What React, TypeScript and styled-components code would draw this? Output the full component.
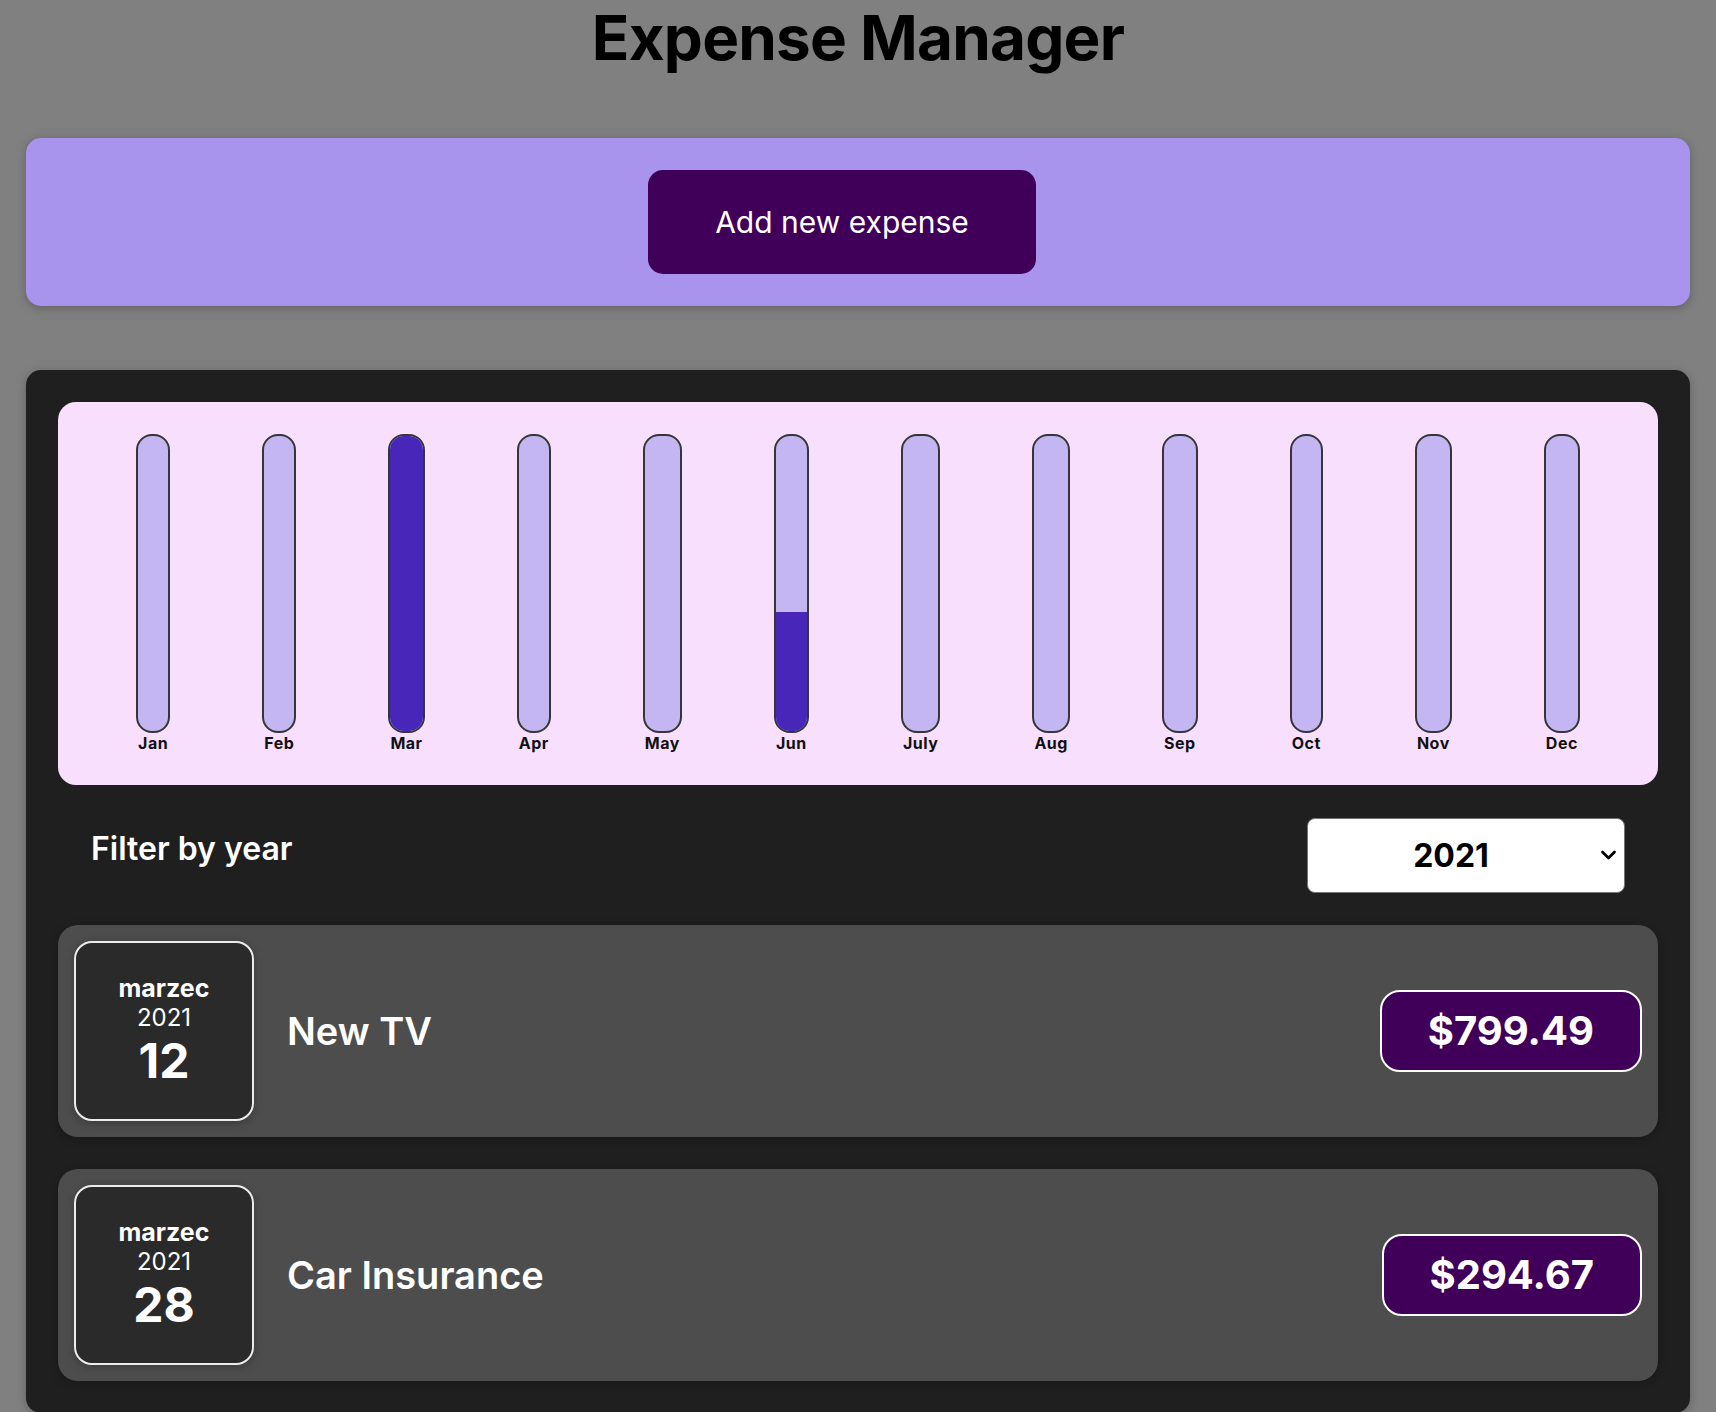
import React from "react";
import styled, { createGlobalStyle } from "styled-components";

const GlobalStyle = createGlobalStyle`
  * { box-sizing: border-box; }
  html, body { margin: 0; padding: 0; }
  body {
    background: #808080;
    font-family: Inter, "Noto Sans", "Liberation Sans", sans-serif;
  }
`;

const Page = styled.div`
  display: flex;
  flex-direction: column;
  padding: 0 26px;
`;

const Title = styled.h1`
  margin: 0;
  text-align: center;
  font-size: 62px;
  line-height: 76px;
  font-weight: 700;
  color: #000;
  letter-spacing: -0.8px;
`;

const NewExpensePanel = styled.div`
  margin-top: 62px;
  background: #a894ed;
  border-radius: 15px;
  padding: 32px;
  display: flex;
  justify-content: center;
  box-shadow: 0 2px 10px rgba(0, 0, 0, 0.25);
`;

const AddButton = styled.button`
  background: #40005a;
  color: #fff;
  border: none;
  border-radius: 15px;
  font-family: inherit;
  font-size: 30px;
  font-weight: 400;
  line-height: 36px;
  padding: 34px 67px;
  margin-right: 32px;
  cursor: pointer;
`;

const ExpensesCard = styled.div`
  margin-top: 64px;
  background: #1f1f1f;
  border-radius: 15px;
  padding: 32px;
  box-shadow: 0 2px 10px rgba(0, 0, 0, 0.25);
`;

const Chart = styled.div`
  background: #f8dffe;
  border-radius: 18px;
  padding: 32px;
  display: flex;
  justify-content: space-around;
`;

const ChartBar = styled.div`
  display: flex;
  flex-direction: column;
  align-items: stretch;
`;

const BarTrack = styled.div`
  height: 299px;
  border: 2px solid #363636;
  border-radius: 16px;
  background: #c3b6f2;
  overflow: hidden;
  display: flex;
  flex-direction: column;
  justify-content: flex-end;
`;

const BarFill = styled.div`
  background: #4826b9;
  width: 100%;
`;

const BarLabel = styled.div`
  font-size: 16px;
  font-weight: 700;
  line-height: 20px;
  text-align: center;
  padding: 0 2px;
  letter-spacing: 0.5px;
  color: #111;
`;

const FilterRow = styled.div`
  display: flex;
  justify-content: space-between;
  align-items: center;
  padding: 33px 33px 32px;
`;

const FilterLabel = styled.label`
  color: #fff;
  font-size: 32px;
  font-weight: 600;
  margin-bottom: 14px;
`;

const SelectWrap = styled.div`
  position: relative;
  width: 318px;
  height: 75px;
`;

const YearSelect = styled.select`
  appearance: none;
  -webkit-appearance: none;
  width: 100%;
  height: 100%;
  background: #fff;
  border: 1px solid #767676;
  border-radius: 8px;
  font-family: inherit;
  font-size: 32px;
  font-weight: 700;
  color: #000;
  text-align: center;
  text-align-last: center;
  padding: 0 30px 0 0;
`;

const Chevron = styled.svg`
  position: absolute;
  right: 8px;
  top: 31px;
  width: 17px;
  height: 12px;
  pointer-events: none;
`;

const ExpenseList = styled.div`
  display: flex;
  flex-direction: column;
  gap: 32px;
`;

const ExpenseItem = styled.div`
  background: #4d4d4d;
  border-radius: 20px;
  padding: 16px;
  display: flex;
  align-items: center;
  box-shadow: 0 2px 8px rgba(0, 0, 0, 0.25);
`;

const DateBox = styled.div`
  width: 180px;
  height: 180px;
  border: 2px solid #ececec;
  border-radius: 18px;
  background: #2a2a2a;
  color: #fff;
  display: flex;
  flex-direction: column;
  align-items: center;
  justify-content: center;
  box-shadow: 0 2px 8px rgba(0, 0, 0, 0.25);
`;

const DateMonth = styled.div`
  font-size: 25px;
  font-weight: 700;
  line-height: 30px;
`;

const DateYear = styled.div`
  font-size: 24px;
  font-weight: 400;
  line-height: 29px;
`;

const DateDay = styled.div`
  font-size: 48px;
  font-weight: 700;
  line-height: 58px;
`;

const ExpenseTitle = styled.h2`
  flex: 1;
  margin: 0 0 0 33px;
  color: #fff;
  font-size: 38px;
  font-weight: 600;
`;

const PriceBadge = styled.div`
  background: #40005a;
  border: 2px solid #fff;
  border-radius: 20px;
  padding: 15px 46px;
  font-size: 40px;
  font-weight: 700;
  line-height: 48px;
  color: #fff;
`;

const months = [
  { label: "Jan", value: 0 },
  { label: "Feb", value: 0 },
  { label: "Mar", value: 100 },
  { label: "Apr", value: 0 },
  { label: "May", value: 0 },
  { label: "Jun", value: 40.5 },
  { label: "July", value: 0 },
  { label: "Aug", value: 0 },
  { label: "Sep", value: 0 },
  { label: "Oct", value: 0 },
  { label: "Nov", value: 0 },
  { label: "Dec", value: 0 },
];

const expenses = [
  { id: 1, month: "marzec", year: "2021", day: "12", title: "New TV", amount: "$799.49" },
  { id: 2, month: "marzec", year: "2021", day: "28", title: "Car Insurance", amount: "$294.67" },
];

export default function App() {
  return (
    <>
      <GlobalStyle />
      <Page>
        <Title>Expense Manager</Title>
        <NewExpensePanel>
          <AddButton>Add new expense</AddButton>
        </NewExpensePanel>
        <ExpensesCard>
          <Chart>
            {months.map((m) => (
              <ChartBar key={m.label}>
                <BarTrack>
                  <BarFill style={{ height: `${m.value}%` }} />
                </BarTrack>
                <BarLabel>{m.label}</BarLabel>
              </ChartBar>
            ))}
          </Chart>
          <FilterRow>
            <FilterLabel>Filter by year</FilterLabel>
            <SelectWrap>
              <YearSelect defaultValue="2021">
                <option value="2019">2019</option>
                <option value="2020">2020</option>
                <option value="2021">2021</option>
                <option value="2022">2022</option>
              </YearSelect>
              <Chevron viewBox="0 0 17 12">
                <path d="M2.5 3 L8.5 9 L14.5 3" fill="none" stroke="#000" strokeWidth="2.8" strokeLinecap="round" strokeLinejoin="round" />
              </Chevron>
            </SelectWrap>
          </FilterRow>
          <ExpenseList>
            {expenses.map((e) => (
              <ExpenseItem key={e.id}>
                <DateBox>
                  <DateMonth>{e.month}</DateMonth>
                  <DateYear>{e.year}</DateYear>
                  <DateDay>{e.day}</DateDay>
                </DateBox>
                <ExpenseTitle>{e.title}</ExpenseTitle>
                <PriceBadge>{e.amount}</PriceBadge>
              </ExpenseItem>
            ))}
          </ExpenseList>
        </ExpensesCard>
      </Page>
    </>
  );
}
